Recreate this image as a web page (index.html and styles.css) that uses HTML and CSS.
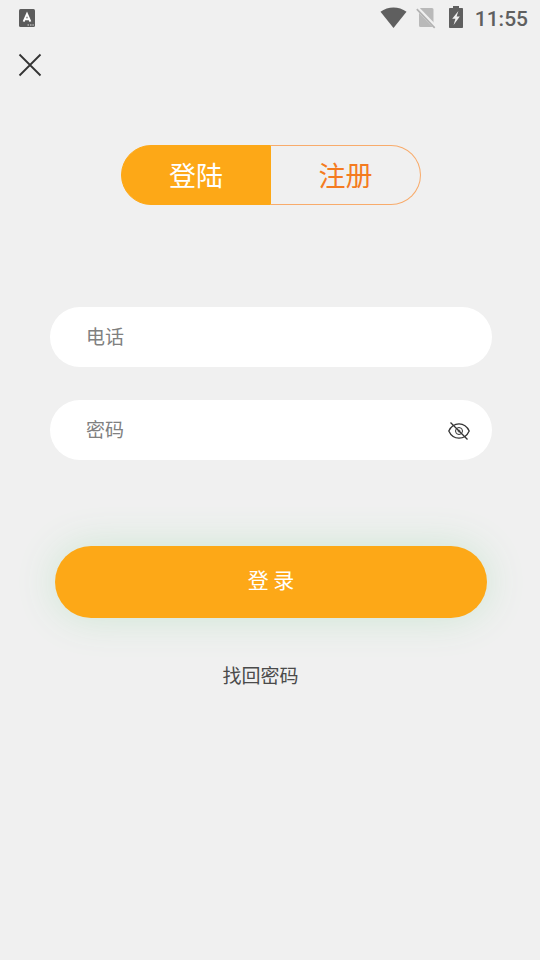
FILE: index.html
```html
<!DOCTYPE html>
<html lang="zh-CN">
<head>
<meta charset="utf-8">
<meta name="viewport" content="width=device-width, initial-scale=1">
<title>登陆</title>
<link rel="stylesheet" href="styles.css">
</head>
<body>
<header class="status">
  <svg class="status-app" width="16" height="18" viewBox="0 0 16 18" aria-hidden="true">
    <rect width="16" height="18" rx="1.5" fill="#5c5c5c"/>
    <path d="M4.600 12.600L8 4.800l3.400 7.800M5.800 10.200h4.400" fill="none" stroke="#fff" stroke-width="1.900"/>
    <path d="M8.500 16h1.500M11 16h1.500M13.400 16h1.400" stroke="#ddd" stroke-width="1.200"/>
  </svg>
  <div class="status-right">
    <svg width="28" height="22" viewBox="0 0 28 22" aria-hidden="true">
      <path d="M.5 4.800C8-1.100 19-1.100 26.500 4.800L13.500 21z" fill="#5f5f5f"/>
    </svg>
    <svg class="status-sim" width="20" height="22" viewBox="0 0 20 22" aria-hidden="true">
      <path d="M7.500 1H16a1.500 1.500 0 0 1 1.500 1.500V20H4.500a1.500 1.500 0 0 1-1.500-1.500V2.500A1.500 1.500 0 0 1 4.500 1z" fill="#b9b9b9"/>
      <path d="M1.200 1.200L19.500 20.200" stroke="#f0f0f0" stroke-width="4"/>
      <path d="M.8 2.200L18.700 20.800" stroke="#b2b2b2" stroke-width="1.700"/>
    </svg>
    <svg class="status-battery" width="14" height="22" viewBox="0 0 14 22" aria-hidden="true">
      <path d="M4 0h6v2h3.200a.8.800 0 0 1 .8.800V21.200a.8.800 0 0 1-.8.800H.8a.8.800 0 0 1-.8-.8V2.800A.8.800 0 0 1 .8 2H4z" fill="#5f5f5f"/>
      <path d="M9.400 5L3.200 12.800h3.200l-1.800 6.200L10.800 10.500H7.600z" fill="#f0f0f0"/>
    </svg>
    <time class="clock">11:55</time>
  </div>
</header>
<nav class="topbar">
  <button class="close" type="button" aria-label="关闭">
    <svg width="24" height="24" viewBox="0 0 24 24" aria-hidden="true">
      <path d="M1.500 1.500l21 21M22.500 1.500l-21 21" stroke="#333" stroke-width="1.800"/>
    </svg>
  </button>
</nav>
<main class="page">
  <div class="tabs">
    <button class="tab tab-active" type="button">登陆</button>
    <button class="tab" type="button">注册</button>
  </div>
  <form class="form">
    <label class="field">
      <input class="input" type="tel" placeholder="电话" aria-label="电话">
    </label>
    <div class="field">
      <input class="input" type="password" placeholder="密码" aria-label="密码">
      <button class="eye" type="button" aria-label="显示密码">
        <svg width="22" height="20" viewBox="0 0 22 20" fill="none" stroke="#333" stroke-width="1.300" aria-hidden="true">
          <path d="M.8 10C3 5.200 6.500 2.800 11 2.800s8 2.400 10.200 7.200C19 14.800 15.500 17.200 11 17.200S3 14.800.8 10z"/>
          <circle cx="11" cy="10" r="3.500" stroke-width="1"/>
          <circle cx="11" cy="10" r="1" stroke-width=".8"/>
          <path d="M2.500 1.500L19.500 18.500"/>
        </svg>
      </button>
    </div>
    <button class="submit" type="submit">登 录</button>
  </form>
  <p class="recover"><a class="recover-link" href="#">找回密码</a></p>
</main>
</body>
</html>
```

FILE: styles.css
```css
* {
  box-sizing: border-box;
}

body {
  margin: 0;
  min-height: 100vh;
  background: #f0f0f0;
  color: #444;
  font-family: "Noto Sans CJK SC", sans-serif;
}

button,
input {
  margin: 0;
  padding: 0;
  border: 0;
  background: none;
  font: inherit;
}

svg {
  display: block;
}

.status {
  display: flex;
  align-items: center;
  justify-content: space-between;
  height: 36px;
  padding: 0 12px 0 19px;
}

.status-right {
  display: flex;
  align-items: center;
}

.status-sim {
  margin-left: 8px;
}

.status-battery {
  margin: 0 12px 2px 13px;
}

.clock {
  padding-top: 2px;
  color: #5f5f5f;
  font: 500 21px/36px Roboto, sans-serif;
}

.topbar {
  padding: 17px 18px 0;
}

.close {
  display: block;
}

.page {
  padding: 68px 48px 0 50px;
}

.tabs {
  display: flex;
  width: 300px;
  margin: 0 auto;
}

.tab {
  width: 50%;
  height: 60px;
  border: 1px solid #f8ab6b;
  border-left: 0;
  border-radius: 0 30px 30px 0;
  color: #f47b20;
  font-size: 27px;
  line-height: 58px;
}

.tab-active {
  border: 1px solid #fda817;
  border-radius: 30px 0 0 30px;
  background: #fda817;
  color: #fff;
}

.form {
  display: flex;
  flex-direction: column;
  gap: 33px;
  margin-top: 102px;
}

.field {
  display: flex;
  align-items: center;
  height: 60px;
  padding: 0 22px 0 36px;
  border-radius: 30px;
  background: #fff;
}

.input {
  flex: 1;
  min-width: 0;
  height: 60px;
  padding-bottom: 4px;
  outline: 0;
  color: #333;
  font-size: 19px;
}

.input::placeholder {
  color: #808080;
  opacity: 1;
}

.eye {
  padding-top: 2px;
}

.submit {
  height: 72px;
  margin: 53px 5px 0;
  padding-bottom: 6px;
  border-radius: 36px;
  background: #fda817;
  box-shadow: 0 0 40px #cde6d3;
  color: #fff;
  font-size: 21px;
}

.recover {
  margin: 42px 0 0;
  padding-right: 21px;
  text-align: center;
}

.recover-link {
  color: #4a4a4a;
  font-size: 19px;
  line-height: 30px;
  text-decoration: none;
}
```
